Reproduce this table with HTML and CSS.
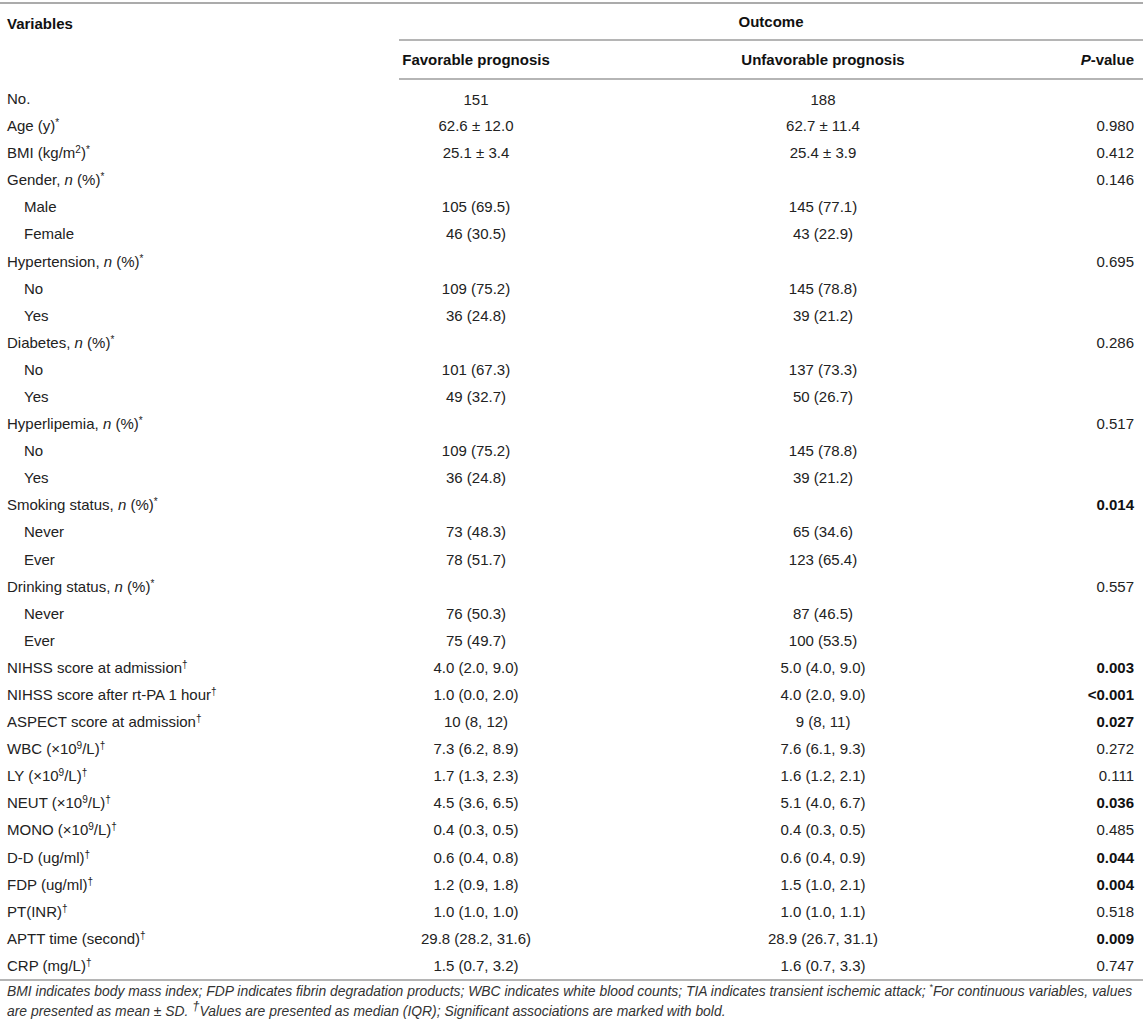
FILE: index.html
```html
<!DOCTYPE html>
<html lang="en">
<head>
<meta charset="utf-8">
<title>Table</title>
<link rel="stylesheet" href="styles.css">
</head>
<body>
<div class="wrap">
<table class="tbl">
  <colgroup>
    <col class="c1"><col class="c2"><col class="c3"><col class="c4">
  </colgroup>
  <thead>
    <tr class="h1">
      <th class="var" rowspan="2">Variables</th>
      <th class="outcome" colspan="3">Outcome</th>
    </tr>
    <tr class="h2">
      <th class="mid">Favorable prognosis</th>
      <th class="mid3">Unfavorable prognosis</th>
      <th class="pv"><i>P</i>-value</th>
    </tr>
  </thead>
  <tbody>
    <tr class="first"><td>No.</td><td class="mid">151</td><td class="mid3">188</td><td class="pv"></td></tr>
    <tr><td>Age (y)<sup>*</sup></td><td class="mid">62.6 ± 12.0</td><td class="mid3">62.7 ± 11.4</td><td class="pv">0.980</td></tr>
    <tr><td>BMI (kg/m<sup>2</sup>)<sup>*</sup></td><td class="mid">25.1 ± 3.4</td><td class="mid3">25.4 ± 3.9</td><td class="pv">0.412</td></tr>
    <tr><td>Gender, <i>n</i> (%)<sup>*</sup></td><td class="mid"></td><td class="mid3"></td><td class="pv">0.146</td></tr>
    <tr><td class="ind">Male</td><td class="mid">105 (69.5)</td><td class="mid3">145 (77.1)</td><td class="pv"></td></tr>
    <tr><td class="ind">Female</td><td class="mid">46 (30.5)</td><td class="mid3">43 (22.9)</td><td class="pv"></td></tr>
    <tr><td>Hypertension, <i>n</i> (%)<sup>*</sup></td><td class="mid"></td><td class="mid3"></td><td class="pv">0.695</td></tr>
    <tr><td class="ind">No</td><td class="mid">109 (75.2)</td><td class="mid3">145 (78.8)</td><td class="pv"></td></tr>
    <tr><td class="ind">Yes</td><td class="mid">36 (24.8)</td><td class="mid3">39 (21.2)</td><td class="pv"></td></tr>
    <tr><td>Diabetes, <i>n</i> (%)<sup>*</sup></td><td class="mid"></td><td class="mid3"></td><td class="pv">0.286</td></tr>
    <tr><td class="ind">No</td><td class="mid">101 (67.3)</td><td class="mid3">137 (73.3)</td><td class="pv"></td></tr>
    <tr><td class="ind">Yes</td><td class="mid">49 (32.7)</td><td class="mid3">50 (26.7)</td><td class="pv"></td></tr>
    <tr><td>Hyperlipemia, <i>n</i> (%)<sup>*</sup></td><td class="mid"></td><td class="mid3"></td><td class="pv">0.517</td></tr>
    <tr><td class="ind">No</td><td class="mid">109 (75.2)</td><td class="mid3">145 (78.8)</td><td class="pv"></td></tr>
    <tr><td class="ind">Yes</td><td class="mid">36 (24.8)</td><td class="mid3">39 (21.2)</td><td class="pv"></td></tr>
    <tr><td>Smoking status, <i>n</i> (%)<sup>*</sup></td><td class="mid"></td><td class="mid3"></td><td class="pv"><b>0.014</b></td></tr>
    <tr><td class="ind">Never</td><td class="mid">73 (48.3)</td><td class="mid3">65 (34.6)</td><td class="pv"></td></tr>
    <tr><td class="ind">Ever</td><td class="mid">78 (51.7)</td><td class="mid3">123 (65.4)</td><td class="pv"></td></tr>
    <tr><td>Drinking status, <i>n</i> (%)<sup>*</sup></td><td class="mid"></td><td class="mid3"></td><td class="pv">0.557</td></tr>
    <tr><td class="ind">Never</td><td class="mid">76 (50.3)</td><td class="mid3">87 (46.5)</td><td class="pv"></td></tr>
    <tr><td class="ind">Ever</td><td class="mid">75 (49.7)</td><td class="mid3">100 (53.5)</td><td class="pv"></td></tr>
    <tr><td>NIHSS score at admission<sup>†</sup></td><td class="mid">4.0 (2.0, 9.0)</td><td class="mid3">5.0 (4.0, 9.0)</td><td class="pv"><b>0.003</b></td></tr>
    <tr><td>NIHSS score after rt-PA 1 hour<sup>†</sup></td><td class="mid">1.0 (0.0, 2.0)</td><td class="mid3">4.0 (2.0, 9.0)</td><td class="pv"><b>&lt;0.001</b></td></tr>
    <tr><td>ASPECT score at admission<sup>†</sup></td><td class="mid">10 (8, 12)</td><td class="mid3">9 (8, 11)</td><td class="pv"><b>0.027</b></td></tr>
    <tr><td>WBC (×10<sup>9</sup>/L)<sup>†</sup></td><td class="mid">7.3 (6.2, 8.9)</td><td class="mid3">7.6 (6.1, 9.3)</td><td class="pv">0.272</td></tr>
    <tr><td>LY (×10<sup>9</sup>/L)<sup>†</sup></td><td class="mid">1.7 (1.3, 2.3)</td><td class="mid3">1.6 (1.2, 2.1)</td><td class="pv">0.111</td></tr>
    <tr><td>NEUT (×10<sup>9</sup>/L)<sup>†</sup></td><td class="mid">4.5 (3.6, 6.5)</td><td class="mid3">5.1 (4.0, 6.7)</td><td class="pv"><b>0.036</b></td></tr>
    <tr><td>MONO (×10<sup>9</sup>/L)<sup>†</sup></td><td class="mid">0.4 (0.3, 0.5)</td><td class="mid3">0.4 (0.3, 0.5)</td><td class="pv">0.485</td></tr>
    <tr><td>D-D (ug/ml)<sup>†</sup></td><td class="mid">0.6 (0.4, 0.8)</td><td class="mid3">0.6 (0.4, 0.9)</td><td class="pv"><b>0.044</b></td></tr>
    <tr><td>FDP (ug/ml)<sup>†</sup></td><td class="mid">1.2 (0.9, 1.8)</td><td class="mid3">1.5 (1.0, 2.1)</td><td class="pv"><b>0.004</b></td></tr>
    <tr><td>PT(INR)<sup>†</sup></td><td class="mid">1.0 (1.0, 1.0)</td><td class="mid3">1.0 (1.0, 1.1)</td><td class="pv">0.518</td></tr>
    <tr><td>APTT time (second)<sup>†</sup></td><td class="mid">29.8 (28.2, 31.6)</td><td class="mid3">28.9 (26.7, 31.1)</td><td class="pv"><b>0.009</b></td></tr>
    <tr class="last"><td>CRP (mg/L)<sup>†</sup></td><td class="mid">1.5 (0.7, 3.2)</td><td class="mid3">1.6 (0.7, 3.3)</td><td class="pv">0.747</td></tr>
  </tbody>
</table>
<p class="note">BMI indicates body mass index; FDP indicates fibrin degradation products; WBC indicates white blood counts; TIA indicates transient ischemic attack; <sup>*</sup>For continuous variables, values are presented as mean ± SD. <sup class="dag">†</sup>Values are presented as median (IQR); Significant associations are marked with bold.</p>
</div>
</body>
</html>
```
FILE: styles.css
```css
html, body {
  margin: 0;
  padding: 0;
  background: #ffffff;
}

.wrap {
  width: 1143px;
  padding-top: 2px;
  font-family: "Liberation Sans", Arial, sans-serif;
  color: #222222;
}

.tbl {
  width: 1143px;
  table-layout: fixed;
  border-collapse: collapse;
  font-size: 15px;
  border-top: 2px solid #ababab;
}

.c1 { width: 399px; }
.c2 { width: 154px; }
.c3 { width: 522px; }
.c4 { width: 68px; }

.tbl th,
.tbl td {
  padding: 0;
  line-height: 17px;
  font-weight: normal;
}

.tbl th {
  font-weight: bold;
  color: #111;
  white-space: nowrap;
}

.h1 th {
  height: 35px;
  vertical-align: middle;
}

.h1 .var {
  text-align: left;
  vertical-align: top;
  padding-left: 7px;
  padding-top: 11px;
}

.outcome {
  text-align: center;
  border-bottom: 2px solid #b5b5b5;
}

.h2 th {
  height: 37px;
  vertical-align: middle;
  border-bottom: 2px solid #b5b5b5;
}

.tbl td {
  height: 27.1px;
  vertical-align: middle;
}

.tbl td:first-child {
  padding-left: 7px;
  text-align: left;
}

.tbl td.ind {
  padding-left: 24px;
}

.mid {
  text-align: center;
}

.mid3 {
  text-align: center;
  padding-left: 18px !important;
}

.pv {
  text-align: right;
  padding-right: 9px !important;
}

.tbl tr.first td {
  height: 26px;
  padding-top: 6px;
}

.tbl tr.last td {
  border-bottom: 2px solid #b5b5b5;
}

.tbl sup {
  font-size: 10px;
  line-height: 0;
  vertical-align: 5px;
}

.tbl b {
  font-weight: bold;
  color: #111;
}

.note {
  margin: 0;
  padding: 0 0 0 7px;
  font-size: 13.9px;
  line-height: 20px;
  font-style: italic;
  color: #333;
}

.note sup {
  font-size: 9px;
  line-height: 0;
  vertical-align: 6px;
}

.note sup.dag {
  font-size: 13px;
}
```
